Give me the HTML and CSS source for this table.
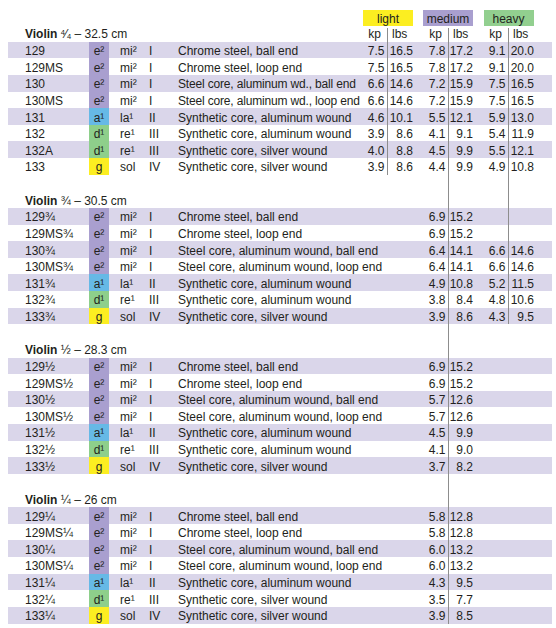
FILE: index.html
```html
<!DOCTYPE html>
<html>
<head>
<meta charset="utf-8">
<link rel="stylesheet" href="styles.css">
</head>
<body>
<div class="sheet">
  <div class="r labels">
    <span class="lbl light">light</span>
    <span class="lbl medium">medium</span>
    <span class="lbl heavy">heavy</span>
  </div>

  <div class="r">
    <div class="ttl"><b>Violin</b> <span class="fr"><sup>4</sup>⁄<sub>4</sub></span> – 32.5 cm</div>
    <span class="kp hd c6 vl">kp</span><span class="lb hd c7">lbs</span>
    <span class="kp hd c8 vl">kp</span><span class="lb hd c9">lbs</span>
    <span class="kp hd c10 vl">kp</span><span class="lb hd c11">lbs</span>
  </div>
  <div class="r alt"><span class="code">129</span><span class="n pu">e²</span><span class="sol">mi²</span><span class="str">I</span><span class="desc">Chrome steel, ball end</span><span class="kp vl">7.5</span><span class="lb">16.5</span><span class="kp vl">7.8</span><span class="lb">17.2</span><span class="kp vl">9.1</span><span class="lb">20.0</span></div>
  <div class="r"><span class="code">129MS</span><span class="n pu">e²</span><span class="sol">mi²</span><span class="str">I</span><span class="desc">Chrome steel, loop end</span><span class="kp vl">7.5</span><span class="lb">16.5</span><span class="kp vl">7.8</span><span class="lb">17.2</span><span class="kp vl">9.1</span><span class="lb">20.0</span></div>
  <div class="r alt"><span class="code">130</span><span class="n pu">e²</span><span class="sol">mi²</span><span class="str">I</span><span class="desc tight">Steel core, aluminum wd., ball end</span><span class="kp vl">6.6</span><span class="lb">14.6</span><span class="kp vl">7.2</span><span class="lb">15.9</span><span class="kp vl">7.5</span><span class="lb">16.5</span></div>
  <div class="r"><span class="code">130MS</span><span class="n pu">e²</span><span class="sol">mi²</span><span class="str">I</span><span class="desc tight">Steel core, aluminum wd., loop end</span><span class="kp vl">6.6</span><span class="lb">14.6</span><span class="kp vl">7.2</span><span class="lb">15.9</span><span class="kp vl">7.5</span><span class="lb">16.5</span></div>
  <div class="r alt"><span class="code">131</span><span class="n bl">a¹</span><span class="sol">la¹</span><span class="str">II</span><span class="desc">Synthetic core, aluminum wound</span><span class="kp vl">4.6</span><span class="lb">10.1</span><span class="kp vl">5.5</span><span class="lb">12.1</span><span class="kp vl">5.9</span><span class="lb">13.0</span></div>
  <div class="r"><span class="code">132</span><span class="n gr">d¹</span><span class="sol">re¹</span><span class="str">III</span><span class="desc">Synthetic core, aluminum wound</span><span class="kp vl">3.9</span><span class="lb">8.6</span><span class="kp vl">4.1</span><span class="lb">9.1</span><span class="kp vl">5.4</span><span class="lb">11.9</span></div>
  <div class="r alt"><span class="code">132A</span><span class="n gr">d¹</span><span class="sol">re¹</span><span class="str">III</span><span class="desc">Synthetic core, silver wound</span><span class="kp vl">4.0</span><span class="lb">8.8</span><span class="kp vl">4.5</span><span class="lb">9.9</span><span class="kp vl">5.5</span><span class="lb">12.1</span></div>
  <div class="r"><span class="code">133</span><span class="n ye">g</span><span class="sol">sol</span><span class="str">IV</span><span class="desc">Synthetic core, silver wound</span><span class="kp vl">3.9</span><span class="lb">8.6</span><span class="kp vl">4.4</span><span class="lb">9.9</span><span class="kp vl">4.9</span><span class="lb">10.8</span></div>

  <div class="r"><span class="kp c8 vl"></span><span class="kp c10 vl"></span></div>

  <div class="r"><div class="ttl"><b>Violin</b> ¾ – 30.5 cm</div><span class="kp c8 vl"></span><span class="kp c10 vl"></span></div>
  <div class="r alt"><span class="code">129¾</span><span class="n pu">e²</span><span class="sol">mi²</span><span class="str">I</span><span class="desc">Chrome steel, ball end</span><span class="kp"></span><span class="lb"></span><span class="kp vl">6.9</span><span class="lb">15.2</span><span class="kp vl"></span><span class="lb"></span></div>
  <div class="r"><span class="code">129MS¾</span><span class="n pu">e²</span><span class="sol">mi²</span><span class="str">I</span><span class="desc">Chrome steel, loop end</span><span class="kp"></span><span class="lb"></span><span class="kp vl">6.9</span><span class="lb">15.2</span><span class="kp vl"></span><span class="lb"></span></div>
  <div class="r alt"><span class="code">130¾</span><span class="n pu">e²</span><span class="sol">mi²</span><span class="str">I</span><span class="desc">Steel core, aluminum wound, ball end</span><span class="kp"></span><span class="lb"></span><span class="kp vl">6.4</span><span class="lb">14.1</span><span class="kp vl">6.6</span><span class="lb">14.6</span></div>
  <div class="r"><span class="code">130MS¾</span><span class="n pu">e²</span><span class="sol">mi²</span><span class="str">I</span><span class="desc">Steel core, aluminum wound, loop end</span><span class="kp"></span><span class="lb"></span><span class="kp vl">6.4</span><span class="lb">14.1</span><span class="kp vl">6.6</span><span class="lb">14.6</span></div>
  <div class="r alt"><span class="code">131¾</span><span class="n bl">a¹</span><span class="sol">la¹</span><span class="str">II</span><span class="desc">Synthetic core, aluminum wound</span><span class="kp"></span><span class="lb"></span><span class="kp vl">4.9</span><span class="lb">10.8</span><span class="kp vl">5.2</span><span class="lb">11.5</span></div>
  <div class="r"><span class="code">132¾</span><span class="n gr">d¹</span><span class="sol">re¹</span><span class="str">III</span><span class="desc">Synthetic core, aluminum wound</span><span class="kp"></span><span class="lb"></span><span class="kp vl">3.8</span><span class="lb">8.4</span><span class="kp vl">4.8</span><span class="lb">10.6</span></div>
  <div class="r alt"><span class="code">133¾</span><span class="n ye">g</span><span class="sol">sol</span><span class="str">IV</span><span class="desc">Synthetic core, silver wound</span><span class="kp"></span><span class="lb"></span><span class="kp vl">3.9</span><span class="lb">8.6</span><span class="kp vl">4.3</span><span class="lb">9.5</span></div>

  <div class="r"><span class="kp c8 vl"></span></div>

  <div class="r"><div class="ttl"><b>Violin</b> ½ – 28.3 cm</div><span class="kp c8 vl"></span></div>
  <div class="r alt"><span class="code">129½</span><span class="n pu">e²</span><span class="sol">mi²</span><span class="str">I</span><span class="desc">Chrome steel, ball end</span><span class="kp"></span><span class="lb"></span><span class="kp vl">6.9</span><span class="lb">15.2</span></div>
  <div class="r"><span class="code">129MS½</span><span class="n pu">e²</span><span class="sol">mi²</span><span class="str">I</span><span class="desc">Chrome steel, loop end</span><span class="kp"></span><span class="lb"></span><span class="kp vl">6.9</span><span class="lb">15.2</span></div>
  <div class="r alt"><span class="code">130½</span><span class="n pu">e²</span><span class="sol">mi²</span><span class="str">I</span><span class="desc">Steel core, aluminum wound, ball end</span><span class="kp"></span><span class="lb"></span><span class="kp vl">5.7</span><span class="lb">12.6</span></div>
  <div class="r"><span class="code">130MS½</span><span class="n pu">e²</span><span class="sol">mi²</span><span class="str">I</span><span class="desc">Steel core, aluminum wound, loop end</span><span class="kp"></span><span class="lb"></span><span class="kp vl">5.7</span><span class="lb">12.6</span></div>
  <div class="r alt"><span class="code">131½</span><span class="n bl">a¹</span><span class="sol">la¹</span><span class="str">II</span><span class="desc">Synthetic core, aluminum wound</span><span class="kp"></span><span class="lb"></span><span class="kp vl">4.5</span><span class="lb">9.9</span></div>
  <div class="r"><span class="code">132½</span><span class="n gr">d¹</span><span class="sol">re¹</span><span class="str">III</span><span class="desc">Synthetic core, aluminum wound</span><span class="kp"></span><span class="lb"></span><span class="kp vl">4.1</span><span class="lb">9.0</span></div>
  <div class="r alt"><span class="code">133½</span><span class="n ye">g</span><span class="sol">sol</span><span class="str">IV</span><span class="desc">Synthetic core, silver wound</span><span class="kp"></span><span class="lb"></span><span class="kp vl">3.7</span><span class="lb">8.2</span></div>

  <div class="r"><span class="kp c8 vl"></span></div>

  <div class="r"><div class="ttl"><b>Violin</b> ¼ – 26 cm</div><span class="kp c8 vl"></span></div>
  <div class="r alt"><span class="code">129¼</span><span class="n pu">e²</span><span class="sol">mi²</span><span class="str">I</span><span class="desc">Chrome steel, ball end</span><span class="kp"></span><span class="lb"></span><span class="kp vl">5.8</span><span class="lb">12.8</span></div>
  <div class="r"><span class="code">129MS¼</span><span class="n pu">e²</span><span class="sol">mi²</span><span class="str">I</span><span class="desc">Chrome steel, loop end</span><span class="kp"></span><span class="lb"></span><span class="kp vl">5.8</span><span class="lb">12.8</span></div>
  <div class="r alt"><span class="code">130¼</span><span class="n pu">e²</span><span class="sol">mi²</span><span class="str">I</span><span class="desc">Steel core, aluminum wound, ball end</span><span class="kp"></span><span class="lb"></span><span class="kp vl">6.0</span><span class="lb">13.2</span></div>
  <div class="r"><span class="code">130MS¼</span><span class="n pu">e²</span><span class="sol">mi²</span><span class="str">I</span><span class="desc">Steel core, aluminum wound, loop end</span><span class="kp"></span><span class="lb"></span><span class="kp vl">6.0</span><span class="lb">13.2</span></div>
  <div class="r alt"><span class="code">131¼</span><span class="n bl">a¹</span><span class="sol">la¹</span><span class="str">II</span><span class="desc">Synthetic core, aluminum wound</span><span class="kp"></span><span class="lb"></span><span class="kp vl">4.3</span><span class="lb">9.5</span></div>
  <div class="r"><span class="code">132¼</span><span class="n gr">d¹</span><span class="sol">re¹</span><span class="str">III</span><span class="desc">Synthetic core, silver wound</span><span class="kp"></span><span class="lb"></span><span class="kp vl">3.5</span><span class="lb">7.7</span></div>
  <div class="r alt"><span class="code">133¼</span><span class="n ye">g</span><span class="sol">sol</span><span class="str">IV</span><span class="desc">Synthetic core, silver wound</span><span class="kp"></span><span class="lb"></span><span class="kp vl">3.9</span><span class="lb">8.5</span></div>
</div>
</body>
</html>
```
FILE: styles.css
```css
html, body {
  margin: 0;
  padding: 0;
  background: #ffffff;
}

.sheet {
  width: 544px;
  margin-left: 8px;
  padding-top: 8.4px;
  font-family: "Liberation Sans", Arial, sans-serif;
  font-size: 12px;
  color: #231f20;
}

.r {
  display: grid;
  grid-template-columns: 81px 20px 36px 33px 180px 30px 30px 31px 29px 31px 30px 13px;
  height: 16.63px;
}

.r > * {
  box-sizing: border-box;
  padding-top: 2.4px;
  line-height: 14px;
  white-space: nowrap;
  min-width: 0;
}

.alt {
  background: #dad6ea;
}

.code {
  padding-left: 17px;
}

.n {
  text-align: center;
}

.pu { background: #a99fcf; }
.bl { background: #66b9e6; }
.gr { background: #8ecf8b; }
.ye { background: #fcee21; }

.sol {
  padding-left: 11px;
}

.str {
  padding-left: 4px;
}

.desc {
  overflow: visible;
}

.desc.tight {
  letter-spacing: -0.17px;
}

.kp {
  text-align: right;
  padding-right: 2.5px;
  border-right: 1px solid transparent;
}

.lb {
  text-align: right;
  padding-right: 5px;
}

.vl {
  border-right-color: #8d8d8d;
}

.c6 { grid-column: 6; }
.c7 { grid-column: 7; }
.c8 { grid-column: 8; }
.c9 { grid-column: 9; }
.c10 { grid-column: 10; }
.c11 { grid-column: 11; }

.ttl {
  grid-column: 1 / 6;
  padding-left: 17px;
}

.ttl b {
  font-weight: bold;
}

.fr sup,
.fr sub {
  font-size: 7.5px;
  line-height: 0;
}

.fr sup {
  vertical-align: 3.5px;
}

.fr sub {
  vertical-align: -0.5px;
}

.r > .hd {
  margin-top: 3px;
  padding-top: 0;
  line-height: 13.4px;
}

.r > .kp.hd {
  padding-right: 6px;
}

.r > .lb.hd {
  text-align: left;
  padding-left: 4px;
  padding-right: 0;
}

.labels > .lbl {
  justify-self: center;
  width: 50px;
  height: 16px;
  margin-top: 1.6px;
  padding-top: 1.6px;
  text-align: center;
  line-height: 14px;
}

.light {
  grid-column: 6 / 8;
  background: #fcee21;
}

.medium {
  grid-column: 8 / 10;
  background: #a99fcf;
}

.heavy {
  grid-column: 10 / 12;
  background: #92cf8f;
}
```
